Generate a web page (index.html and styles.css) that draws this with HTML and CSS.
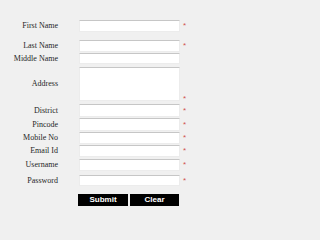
FILE: index.html
```html
<!DOCTYPE html>
<html>
<head>
<meta charset="utf-8">
<link rel="stylesheet" href="styles.css">
</head>
<body>
<form class="form">
  <div class="row r-first"><label class="lbl">First Name</label><input class="field" type="text"><span class="req">*</span></div>
  <div class="row r-last"><label class="lbl">Last Name</label><input class="field" type="text"><span class="req">*</span></div>
  <div class="row r-mid"><label class="lbl">Middle Name</label><input class="field short" type="text"></div>
  <div class="row r-addr"><label class="lbl">Address</label><textarea class="field area"></textarea><span class="req req-bottom">*</span></div>
  <div class="row r-dist"><label class="lbl">District</label><input class="field tall" type="text"><span class="req">*</span></div>
  <div class="row r-pin"><label class="lbl">Pincode</label><input class="field tall" type="text"><span class="req">*</span></div>
  <div class="row r-tight"><label class="lbl">Mobile No</label><input class="field" type="text"><span class="req">*</span></div>
  <div class="row r-tight"><label class="lbl">Email Id</label><input class="field" type="text"><span class="req">*</span></div>
  <div class="row r-user"><label class="lbl">Username</label><input class="field" type="text"><span class="req">*</span></div>
  <div class="row r-pass"><label class="lbl">Password</label><input class="field short" type="password"><span class="req">*</span></div>
  <div class="actions"><button class="btn btn-submit" type="button">Submit</button><button class="btn btn-clear" type="button">Clear</button></div>
</form>
</body>
</html>
```
FILE: styles.css
```css
html, body {
  margin: 0;
  padding: 0;
  background: #f0f0f0;
}
.form {
  padding-top: 20px;
  font-family: "Liberation Serif", "Times New Roman", serif;
  font-size: 8px;
  color: #262626;
}
.row {
  display: flex;
  align-items: center;
}
.lbl {
  width: 58px;
  text-align: right;
  margin-right: 21px;
  line-height: 10px;
  white-space: nowrap;
}
.field {
  box-sizing: border-box;
  width: 101px;
  height: 12px;
  margin: 0;
  padding: 0;
  background: #fff;
  border: 1px solid #ececec;
  border-top-color: #c6c6c6;
  border-radius: 0;
  outline: none;
}
.field.short { height: 11px; }
.field.tall { height: 13px; }
.area {
  height: 34px;
  resize: none;
  display: block;
}
.req {
  margin-left: 3px;
  color: #d05050;
  font-family: "Liberation Sans", Arial, sans-serif;
  font-size: 8px;
  line-height: 8px;
}
.req-bottom {
  align-self: flex-end;
  margin-bottom: -2px;
}
.r-last { margin-top: 8px; }
.r-mid { margin-top: 1px; }
.r-addr { margin-top: 3px; }
.r-dist { margin-top: 3px; }
.r-pin { margin-top: 1px; }
.r-tight { margin-top: 1px; }
.r-user { margin-top: 2px; }
.r-pass { margin-top: 4px; }
.actions {
  display: flex;
  margin-top: 8px;
  margin-left: 78px;
  gap: 2px;
}
.btn {
  height: 12px;
  padding: 0;
  margin: 0;
  border: none;
  border-radius: 0;
  background: #000;
  color: #fff;
  font-family: "Liberation Sans", Arial, sans-serif;
  font-weight: bold;
  font-size: 8px;
  line-height: 12px;
}
.btn-submit { width: 50px; }
.btn-clear { width: 49px; }
```
